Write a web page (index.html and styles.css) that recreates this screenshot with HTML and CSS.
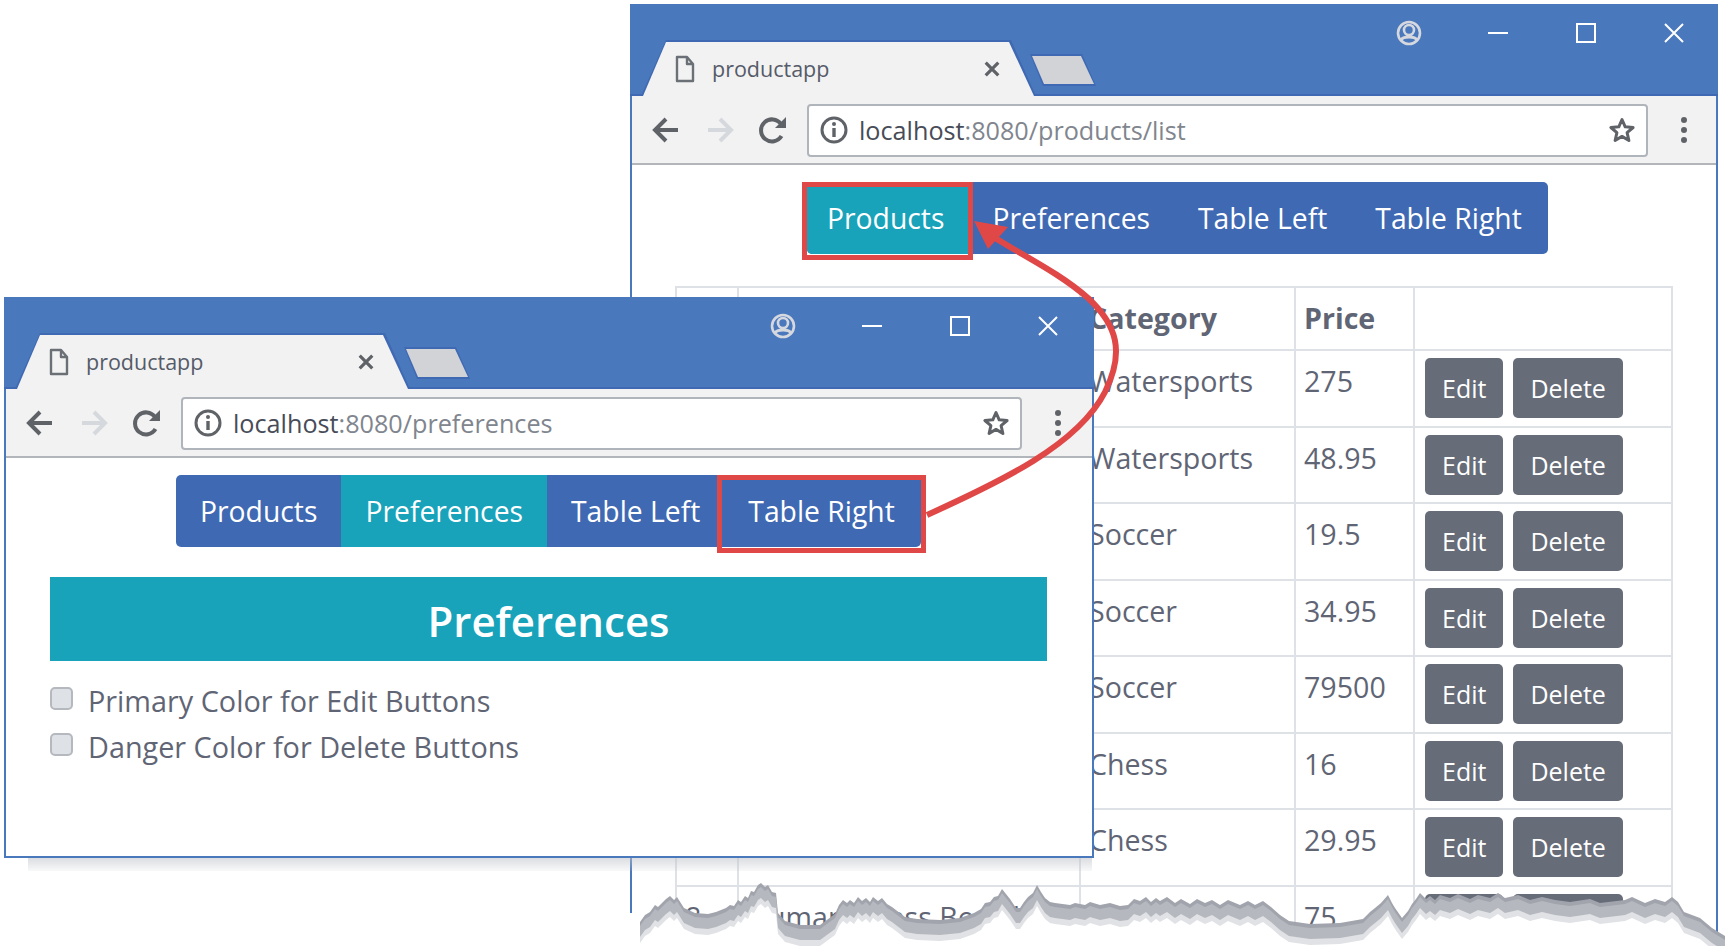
FILE: index.html
```html
<!DOCTYPE html>
<html lang="en">
<head>
  <meta charset="UTF-8">
  <title>productapp</title>
  <link rel="stylesheet" href="styles.css">
</head>
<body>
  <svg class="icon-defs" width="0" height="0">
    <symbol id="i-doc" viewBox="0 0 20 28"><path d="M2 2h10l6 7v17H2zM12 2v7h6" fill="none" stroke="currentColor" stroke-width="2.4" stroke-linejoin="round"/></symbol>
    <symbol id="i-x" viewBox="0 0 20 20"><path d="M3 3l14 14M17 3L3 17" fill="none" stroke="currentColor" stroke-width="3.6"/></symbol>
    <symbol id="i-avatar" viewBox="0 0 26 26"><circle cx="13" cy="13" r="11" fill="none" stroke="currentColor" stroke-width="2.6"/><circle cx="13" cy="10" r="5" fill="none" stroke="currentColor" stroke-width="2.6"/><path d="M5 20c2-4 14-4 16 0" fill="none" stroke="currentColor" stroke-width="3"/></symbol>
    <symbol id="i-min" viewBox="0 0 20 20"><path d="M0 10h20" stroke="currentColor" stroke-width="2"/></symbol>
    <symbol id="i-max" viewBox="0 0 20 20"><rect x="1" y="1" width="18" height="18" fill="none" stroke="currentColor" stroke-width="2"/></symbol>
    <symbol id="i-close" viewBox="0 0 20 20"><path d="M1 1l18 18M19 1L1 19" fill="none" stroke="currentColor" stroke-width="2"/></symbol>
    <symbol id="i-arrow" viewBox="0 0 28 28"><path d="M26 14H4M14 3L3 14l11 11" fill="none" stroke="currentColor" stroke-width="4"/></symbol>
    <symbol id="i-reload" viewBox="0 0 28 28"><path d="M22.500 20a11 11 0 1 1 -.5-12" fill="none" stroke="currentColor" stroke-width="4"/><path d="M27 1v11H16z" fill="currentColor"/></symbol>
    <symbol id="i-info" viewBox="0 0 28 28"><circle cx="14" cy="14" r="12" fill="none" stroke="currentColor" stroke-width="3"/><path d="M14 12v9" stroke="currentColor" stroke-width="3.4"/><circle cx="14" cy="8" r="2" fill="currentColor"/></symbol>
    <symbol id="i-star" viewBox="0 0 28 28"><path d="M14 3.500l3.200 7.300 7.900.7-6 5.200 1.800 7.800L14 20.400l-6.900 4.100 1.800-7.800-6-5.200 7.900-.7z" fill="none" stroke="currentColor" stroke-width="3" stroke-linejoin="round"/></symbol>
    <symbol id="i-dots" viewBox="0 0 8 28"><circle cx="4" cy="4" r="3" fill="currentColor"/><circle cx="4" cy="14" r="3" fill="currentColor"/><circle cx="4" cy="24" r="3" fill="currentColor"/></symbol>
  </svg>

  <!-- window behind: product list -->
  <section class="window window-back">
    <div class="titlebar">
      <div class="tab">
        <svg class="tab-doc"><use href="#i-doc"/></svg>
        <span class="tab-title">productapp</span>
        <svg class="tab-x"><use href="#i-x"/></svg>
      </div>
      <div class="newtab"></div>
      <svg class="win-avatar"><use href="#i-avatar"/></svg>
      <svg class="win-min"><use href="#i-min"/></svg>
      <svg class="win-max"><use href="#i-max"/></svg>
      <svg class="win-close"><use href="#i-close"/></svg>
    </div>
    <div class="toolbar">
      <svg class="tool-back"><use href="#i-arrow"/></svg>
      <svg class="tool-forward"><use href="#i-arrow"/></svg>
      <svg class="tool-reload"><use href="#i-reload"/></svg>
      <div class="omnibox">
        <svg class="omni-info"><use href="#i-info"/></svg>
        <span class="url"><b>localhost</b>:8080/products/list</span>
        <svg class="omni-star"><use href="#i-star"/></svg>
      </div>
      <svg class="tool-dots"><use href="#i-dots"/></svg>
    </div>
    <div class="content">
      <nav class="appnav">
        <a class="nav-item active marked">Products</a>
        <a class="nav-item">Preferences</a>
        <a class="nav-item">Table Left</a>
        <a class="nav-item">Table Right</a>
      </nav>
      <!-- first two columns of the upper rows lie under the front window -->
      <table class="products">
        <thead>
          <tr><th class="col-id"></th><th class="col-name"></th><th class="col-cat">Category</th><th class="col-price">Price</th><th></th></tr>
        </thead>
        <tbody>
          <tr><td></td><td></td><td>Watersports</td><td>275</td><td><a class="btn">Edit</a><a class="btn">Delete</a></td></tr>
          <tr><td></td><td></td><td>Watersports</td><td>48.95</td><td><a class="btn">Edit</a><a class="btn">Delete</a></td></tr>
          <tr><td></td><td></td><td>Soccer</td><td>19.5</td><td><a class="btn">Edit</a><a class="btn">Delete</a></td></tr>
          <tr><td></td><td></td><td>Soccer</td><td>34.95</td><td><a class="btn">Edit</a><a class="btn">Delete</a></td></tr>
          <tr><td></td><td></td><td>Soccer</td><td>79500</td><td><a class="btn">Edit</a><a class="btn">Delete</a></td></tr>
          <tr><td></td><td></td><td>Chess</td><td>16</td><td><a class="btn">Edit</a><a class="btn">Delete</a></td></tr>
          <tr><td></td><td></td><td>Chess</td><td>29.95</td><td><a class="btn">Edit</a><a class="btn">Delete</a></td></tr>
          <tr><td>8</td><td>Human Chess Board</td><td>Chess</td><td>75</td><td><a class="btn">Edit</a><a class="btn">Delete</a></td></tr>
        </tbody>
      </table>
    </div>
  </section>

  <!-- torn bottom edge of the back window -->
  <svg class="torn" width="1725" height="946" viewBox="0 0 1725 946">
    <defs>
      <polygon id="tear" points="640,922 645,915 650,912 655,905 658,907 662,903 666,899 670,896 674,900 677,897 684,908 695,913 708,914 716,912 726,908 730,905 734,906 738,900 741,902 745,896 748,898 751,891 754,892 758,885 761,883 765,887 768,885 772,892 776,893 778,913 785,921 800,925 820,925 835,914 839,905 843,900 847,903 850,900 854,903 858,897 862,901 866,898 870,902 873,897 878,901 882,898 887,904 892,907 905,917 917,919 940,920 960,918 974,913 981,909 985,903 990,902 994,897 998,896 1002,889 1006,894 1010,899 1016,908 1020,908 1024,902 1028,897 1033,893 1037,885 1041,892 1045,898 1050,902 1055,903 1070,905 1075,903 1085,905 1090,902 1100,905 1110,903 1120,906 1128,905 1134,899 1140,901 1146,897 1151,902 1156,898 1160,901 1167,897 1175,903 1181,899 1190,904 1197,899 1205,903 1212,900 1220,905 1228,900 1240,905 1248,901 1255,905 1263,901 1271,907 1280,915 1289,921 1310,924 1340,923 1363,919 1370,912 1375,908 1381,903 1388,895 1392,903 1395,908 1402,918 1408,911 1412,904 1416,899 1420,893 1426,899 1430,896 1435,900 1440,895 1450,898 1458,894 1470,899 1478,895 1490,898 1498,893 1505,898 1518,895 1530,900 1542,897 1555,900 1570,902 1590,899 1600,903 1625,900 1632,897 1645,903 1655,899 1665,902 1672,897 1678,902 1684,912 1700,918 1712,928 1725,936 1725,946 640,946"/>
    </defs>
    <rect class="tear-white" x="620" y="913" width="28" height="33"/>
    <use href="#tear" class="tear-dark"/>
    <use href="#tear" class="tear-mid" y="4"/>
    <use href="#tear" class="tear-light" y="15"/>
    <use href="#tear" class="tear-white" y="21"/>
  </svg>

  <!-- window in front: preferences -->
  <section class="window window-front">
    <div class="titlebar">
      <div class="tab">
        <svg class="tab-doc"><use href="#i-doc"/></svg>
        <span class="tab-title">productapp</span>
        <svg class="tab-x"><use href="#i-x"/></svg>
      </div>
      <div class="newtab"></div>
      <svg class="win-avatar"><use href="#i-avatar"/></svg>
      <svg class="win-min"><use href="#i-min"/></svg>
      <svg class="win-max"><use href="#i-max"/></svg>
      <svg class="win-close"><use href="#i-close"/></svg>
    </div>
    <div class="toolbar">
      <svg class="tool-back"><use href="#i-arrow"/></svg>
      <svg class="tool-forward"><use href="#i-arrow"/></svg>
      <svg class="tool-reload"><use href="#i-reload"/></svg>
      <div class="omnibox">
        <svg class="omni-info"><use href="#i-info"/></svg>
        <span class="url"><b>localhost</b>:8080/preferences</span>
        <svg class="omni-star"><use href="#i-star"/></svg>
      </div>
      <svg class="tool-dots"><use href="#i-dots"/></svg>
    </div>
    <div class="content">
      <nav class="appnav">
        <a class="nav-item">Products</a>
        <a class="nav-item active">Preferences</a>
        <a class="nav-item">Table Left</a>
        <a class="nav-item marked">Table Right</a>
      </nav>
      <h2 class="pref-title">Preferences</h2>
      <label class="pref-row"><span class="check"></span>Primary Color for Edit Buttons</label>
      <label class="pref-row"><span class="check"></span>Danger Color for Delete Buttons</label>
    </div>
  </section>

  <!-- red arrow from Table Right up to Products -->
  <svg class="callout-arrow" width="1725" height="946" viewBox="0 0 1725 946">
    <path class="arrow-line" d="M927 515C1000 482 1078 445 1105 392C1125 352 1117 325 1088 298C1058 272 1025 257 992 236"/>
    <path class="arrow-head" d="M974 221L1008 227L988 249Z"/>
  </svg>
</body>
</html>
```

FILE: styles.css
```css
body {
  margin: 0;
  width: 1725px;
  height: 946px;
  position: relative;
  overflow: hidden;
  background: #fff;
  font-family: "Open Sans", "Noto Sans", sans-serif;
  color: #5f6574;
}

.icon-defs {
  position: absolute;
}

svg {
  display: block;
}

/* windows sit on a free canvas */
.window {
  position: absolute;
  box-sizing: border-box;
  background: #fff;
  border: solid #4a78bc;
  border-width: 0 2px 2px;
}

.window-back {
  left: 630px;
  top: 4px;
  width: 1088px;
  height: 930px;
  z-index: 1;
}

.window-front {
  left: 4px;
  top: 297px;
  width: 1090px;
  height: 561px;
  z-index: 3;
}

/* soft shadow under the front window */
.window-front::after {
  content: "";
  position: absolute;
  left: 22px;
  right: 0;
  top: 100%;
  height: 13px;
  margin-top: 2px;
  background: linear-gradient(rgba(190, 193, 200, 0.55), rgba(190, 193, 200, 0.1));
}

.titlebar {
  position: relative;
  box-sizing: border-box;
  height: 92px;
  margin: 0 -2px;
  background: #4a78bc;
  border-bottom: 2px solid #3f69b2;
}

.tab {
  position: absolute;
  left: 11px;
  top: 36px;
  box-sizing: border-box;
  width: 395px;
  height: 56px;
  padding: 2px 0 0 2px;
  background: #3f69b2;
  clip-path: polygon(0 100%, 25px 0, 370px 0, 395px 100%);
  display: flex;
  align-items: center;
}

.tab::before {
  content: "";
  position: absolute;
  inset: 2px 2px 0;
  background: #f2f2f2;
  clip-path: polygon(0 100%, 23px 0, 366px 0, 391px 100%);
}

.tab-doc, .tab-title, .tab-x {
  position: relative;
}

.tab-doc {
  width: 20px;
  height: 28px;
  margin: 0 17px 0 32px;
  color: #6b6f76;
}

.tab-title {
  font-size: 21.5px;
  margin-bottom: 2px;
  color: #555b69;
  flex: 1;
}

.tab-x {
  width: 18px;
  height: 18px;
  margin-right: 35px;
  color: #5f6368;
}

.newtab {
  position: absolute;
  left: 400px;
  top: 50px;
  width: 66px;
  height: 32px;
  background: #3f69b2;
  clip-path: polygon(0 0, 52px 0, 66px 100%, 13px 100%);
}

.newtab::before {
  content: "";
  position: absolute;
  inset: 2px;
  background: #d2d3d6;
  clip-path: polygon(0 0, 49px 0, 62px 100%, 12px 100%);
}

.win-avatar, .win-min, .win-max, .win-close {
  position: absolute;
  width: 20px;
  height: 20px;
  top: 19px;
  color: #fff;
}

.win-avatar {
  left: 766px;
  top: 16px;
  width: 26px;
  height: 26px;
  color: #d5d8df;
}

.win-min { left: 858px; }
.win-max { left: 946px; }
.win-close { left: 1034px; }

.toolbar {
  box-sizing: border-box;
  height: 69px;
  background: #f2f2f2;
  border-bottom: 2px solid #b2b5ba;
  display: flex;
  align-items: center;
  padding: 1px 0 0 20px;
}

.tool-back, .tool-forward, .tool-reload {
  width: 28px;
  height: 28px;
  flex: none;
  color: #5f6368;
}

.tool-forward {
  margin-left: 26px;
  color: #d5d8dc;
  transform: scaleX(-1);
}

.tool-reload {
  margin-left: 25px;
}

.omnibox {
  box-sizing: border-box;
  width: 841px;
  height: 53px;
  margin-left: 20px;
  background: #fff;
  border: 2px solid #b0b4bb;
  border-radius: 4px;
  display: flex;
  align-items: center;
  padding: 0 10px 0 11px;
}

.omni-info {
  width: 28px;
  height: 28px;
  color: #5f6368;
}

.url {
  flex: 1;
  margin-left: 11px;
  font-size: 25.200px;
  color: #80858e;
  white-space: nowrap;
}

.url b {
  font-weight: normal;
  color: #474c58;
}

.omni-star {
  width: 28px;
  height: 28px;
  color: #5f6368;
}

.tool-dots {
  width: 8px;
  height: 28px;
  margin-left: 32px;
  color: #5f6368;
}

.content {
  padding-top: 17px;
}

.appnav {
  display: inline-flex;
  height: 72px;
  margin-left: 175px;
  background: #3f69b2;
  border-radius: 5px;
  color: #fff;
  font-size: 28.300px;
  vertical-align: top;
}

.window-front .appnav {
  margin-left: 170px;
}

.nav-item {
  display: flex;
  align-items: center;
  padding: 0 24px;
  position: relative;
}

.nav-item:first-child {
  border-radius: 5px 0 0 5px;
}

.nav-item:last-child {
  padding-right: 26px;
}

.window-back .nav-item:first-child {
  padding-left: 20px;
}

.nav-item.active {
  background: #18a3ba;
}

/* red annotation box */
.nav-item.marked::after {
  content: "";
  position: absolute;
  top: 0;
  left: -5px;
  right: -5px;
  bottom: -6px;
  border: 5px solid #e04848;
}

.window-front .nav-item.marked::after {
  left: -7px;
}

.products {
  display: table;
  margin: 32px 0 0 43px;
  width: 998px;
  border-collapse: collapse;
  table-layout: fixed;
  font-size: 28.600px;
}

.products th, .products td {
  box-sizing: border-box;
  border: 2px solid #dee2e6;
  text-align: left;
  vertical-align: top;
  padding: 10px 8px 0;
  height: 76.500px;
  white-space: nowrap;
  overflow: hidden;
}

.products th {
  height: 63px;
  padding-top: 10px;
  font-weight: 700;
}

.col-id { width: 62px; }
.col-name { width: 342px; }
.col-cat { width: 215px; }
.col-price { width: 119px; }

.products td:last-child {
  padding: 7px 10px 0;
}

.btn {
  display: inline-block;
  box-sizing: border-box;
  height: 60px;
  line-height: 60px;
  padding: 0 17px;
  margin-right: 10px;
  background: #676c79;
  border-radius: 5px;
  color: #fff;
  font-size: 25px;
}

.pref-title {
  margin: 30px 45px 16px 44px;
  height: 84px;
  line-height: 88px;
  background: #18a3ba;
  color: #fff;
  font-size: 42px;
  font-weight: 600;
  text-align: center;
}

.pref-row {
  display: flex;
  align-items: center;
  height: 46px;
  margin-left: 44px;
  font-size: 28.800px;
}

.check {
  box-sizing: border-box;
  width: 23px;
  height: 23px;
  margin-right: 15px;
  margin-top: -4px;
  background: #dee1e5;
  border: 2px solid #b5b9bf;
  border-radius: 5px;
}

.torn {
  position: absolute;
  left: 0;
  top: 0;
  z-index: 2;
}

.tear-dark { fill: #a1a4ac; }
.tear-mid { fill: #b5b8be; }
.tear-light { fill: #e0e2e5; }
.tear-white { fill: #fff; }

.callout-arrow {
  position: absolute;
  left: 0;
  top: 0;
  z-index: 4;
  pointer-events: none;
}

.arrow-line {
  fill: none;
  stroke: #e04848;
  stroke-width: 6;
}

.arrow-head {
  fill: #e04848;
}
```
